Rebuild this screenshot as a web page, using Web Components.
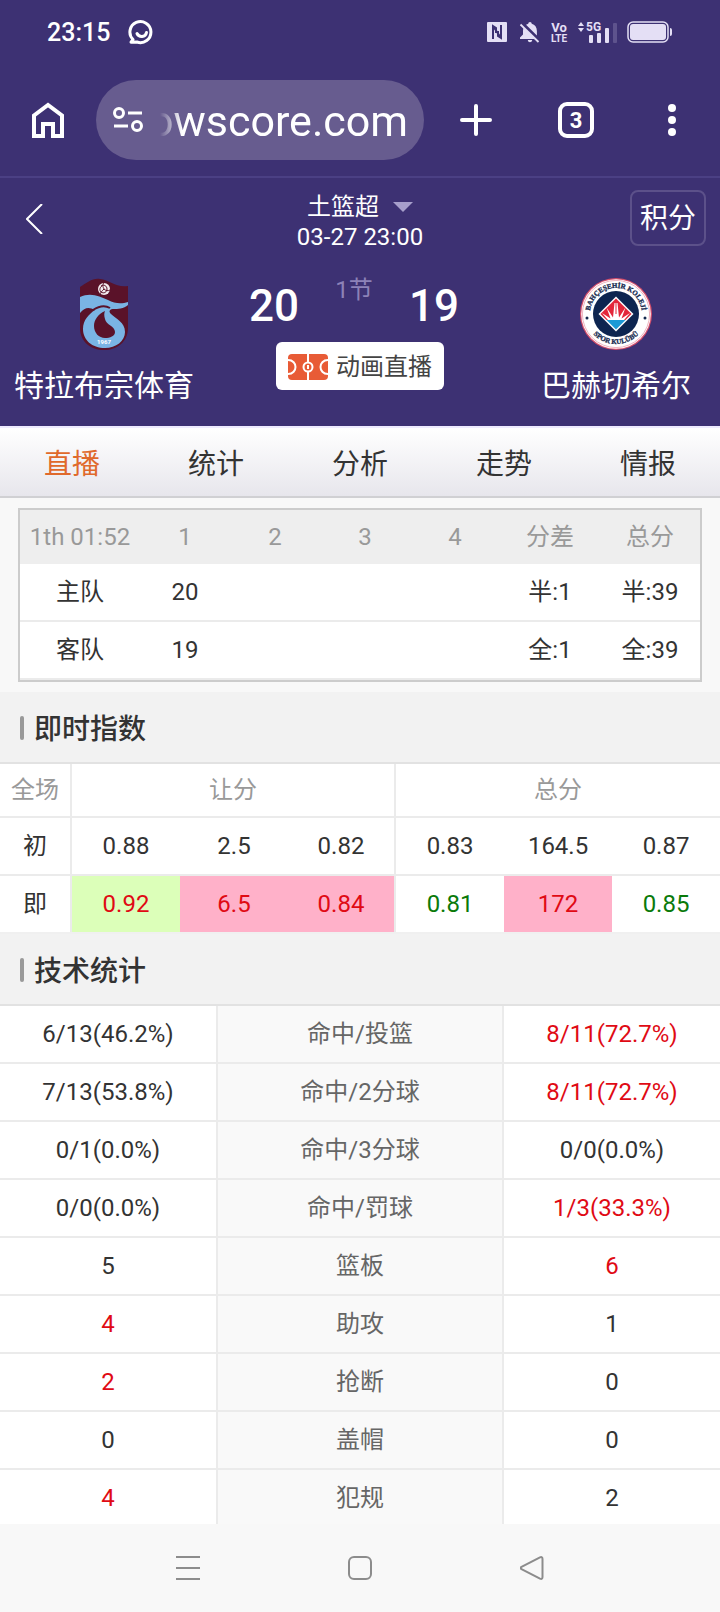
<!DOCTYPE html>
<html lang="zh-CN">
<head>
<meta charset="utf-8">
<meta name="viewport" content="width=device-width, initial-scale=1">
<title>土篮超 特拉布宗体育 - 巴赫切希尔</title>
<style>
  html, body { margin: 0; height: 100%; }
  body {
    --brand: #3d3173;
    --ink: #333;
    --muted: #999;
    --rule: #ebebeb;
    --up: #e00a14;
    --down: #0a7a0a;
    background: #f8f8f8;
    color: var(--ink);
    font-family: Roboto, "Noto Sans CJK SC", sans-serif;
    font-size: 24px;
    line-height: 32px;
  }
</style>
</head>
<body>
<match-app></match-app>

<script>
const define = (name, markup, setup) => {
  customElements.define(name, class extends HTMLElement {
    constructor() {
      super();
      const template = document.createElement('template');
      template.innerHTML = markup;
      this.attachShadow({ mode: 'open' }).appendChild(template.content);
    }
    connectedCallback() { if (setup) setup.call(this, this.shadowRoot); }
  });
};

define('status-bar', `
  <style>
    :host { display: flex; justify-content: space-between; align-items: center; height: 64px; padding: 0 47px; background: var(--brand); color: #fff; }
    div { display: flex; align-items: center; }
    svg { display: block; }
    .left { gap: 18px; }
    .right { gap: 8px; }
    .nfc { margin-right: 4px; }
    time { padding-top: 2px; font-size: 25px; font-weight: 500; }
    text { font-family: Roboto, sans-serif; font-weight: 700; }
  </style>
  <div class="left">
    <time>23:15</time>
    <svg width="26" height="26" viewBox="0 0 26 26" fill="none" stroke="#fff" stroke-width="3">
      <path d="M5 20.5A10.5 10.5 0 1 1 9 23L3 23.2z" stroke-linejoin="round"/>
      <path d="M9 14.5c2 4.200 8.500 4 9.500-1" stroke-linecap="round"/>
    </svg>
  </div>
  <div class="right">
    <svg class="nfc" width="20" height="20" viewBox="0 0 20 20" aria-label="NFC">
      <rect width="20" height="20" rx="1" fill="#e4dff5"/>
      <path d="M6 17V4l3 2v5M14 3v13l-3-2V9M6 4l8 12" fill="none" stroke="#3d3173" stroke-width="2"/>
    </svg>
    <svg width="22" height="22" viewBox="0 0 22 22" aria-label="静音">
      <path fill="#e4dff5" d="M11 1c1 0 1.700.7 1.700 1.800 3.300.8 5.200 3.500 5.200 7.200v4.500L7 3.700c.7-.4 1.500-.7 2.300-.9C9.300 1.700 10 1 11 1zM4.700 6.800 16 18H1v-1.500l3-3V10c0-1.200.2-2.300.7-3.200zM8.800 19h4.400c-.2 3-4.200 3-4.400 0z"/>
      <path d="M1.500 3.500l18 17.500" stroke="#e4dff5" stroke-width="1.800"/>
    </svg>
    <svg width="20" height="22" viewBox="0 0 20 22" fill="#e4dff5">
      <text x="10" y="11" font-size="13" text-anchor="middle">Vo</text>
      <text x="10" y="21" font-size="10" text-anchor="middle">LTE</text>
    </svg>
    <svg width="42" height="22" viewBox="0 0 42 22" fill="#e4dff5">
      <path d="M1 5l3-4 3 4zM1 7h6l-3 4z"/>
      <text x="9" y="10" font-size="12">5G</text>
      <rect x="12" y="14" width="4" height="8" rx="1"/>
      <rect x="20" y="12" width="4" height="10" rx="1"/>
      <rect x="28" y="7" width="4" height="15" rx="1"/>
      <rect x="36" y="2" width="4" height="20" rx="1" fill="#5e538d"/>
    </svg>
    <svg width="46" height="22" viewBox="0 0 46 22" aria-label="电量">
      <rect x="1" y="1" width="40" height="20" rx="5" fill="none" stroke="#e4dff5" stroke-width="1.500"/>
      <rect x="3" y="3" width="36" height="16" rx="3" fill="#e4dff5"/>
      <path d="M43 7q2 0 2 2v4q0 2-2 2z" fill="#e4dff5"/>
    </svg>
  </div>
`);

define('browser-bar', `
  <style>
    :host { display: flex; align-items: center; padding: 16px 0; background: var(--brand); border-bottom: 2px solid #4b4084; }
    button { flex: none; width: 96px; height: 80px; padding: 0; border: 0; background: none; display: grid; place-items: center; }
    .add { width: 104px; }
    .pill { flex: 1; min-width: 0; height: 80px; box-sizing: border-box; padding: 0 16px; border-radius: 40px; background: #675c8f; display: flex; align-items: center; gap: 16px; }
    .pill svg { flex: none; }
    .url { flex: 1; min-width: 0; overflow: hidden; display: flex; justify-content: flex-end; mask-image: linear-gradient(90deg, transparent, #000 22px); -webkit-mask-image: linear-gradient(90deg, transparent, #000 22px); }
    input { flex: none; width: 272px; height: 64px; padding: 2px 0 0; border: 0; outline: 0; background: none; color: #fff; font: 400 43px/64px Roboto, sans-serif; text-align: right; }
    text { font: 700 22px Roboto, sans-serif; }
  </style>
  <button aria-label="主页"><svg width="32" height="36" viewBox="0 0 32 36" fill="none" stroke="#fff" stroke-width="4"><path d="M2 34V13.500L16 3l14 10.500V34h-9V22H11v12z"/></svg></button>
  <div class="pill">
    <svg width="32" height="28" viewBox="0 0 32 28" fill="none" stroke="#fff" stroke-width="3"><circle cx="7" cy="7" r="4.500"/><path d="M16 7h14M2 20h14"/><circle cx="25" cy="20" r="4.500"/></svg>
    <div class="url"><input aria-label="网址" value="owscore.com"></div>
  </div>
  <button class="add" aria-label="新标签页"><svg width="32" height="32" viewBox="0 0 32 32" stroke="#fff" stroke-width="4" stroke-linecap="round"><path d="M16 2v28M2 16h28"/></svg></button>
  <button aria-label="标签页"><svg width="36" height="36" viewBox="0 0 36 36"><rect x="2" y="2" width="32" height="32" rx="7" fill="none" stroke="#fff" stroke-width="4"/><text x="18" y="26" text-anchor="middle" fill="#fff">3</text></svg></button>
  <button aria-label="更多"><svg width="8" height="32" viewBox="0 0 8 32" fill="#fff"><circle cx="4" cy="4" r="4"/><circle cx="4" cy="16" r="4"/><circle cx="4" cy="28" r="4"/></svg></button>
`);

define('home-crest', `
  <style>:host { display: block; } svg { display: block; } text { font: 700 6px Roboto, sans-serif; }</style>
  <svg width="50" height="72" viewBox="0 0 50 72">
    <path fill="#5a1229" d="M1 9C8 5 13 0 21 1c10 1 16 9 28 7v42c0 14-11 22-24 22S1 64 1 50z"/>
    <path fill="#7ab4e4" d="M1 19c10-5 20-1 28 3 7 4 14 4 20 2v3c-4 4-11 4-14 4-4 0-6 2-3 5 5 5 14 8 14 18 0 9-9 16-20 16C13 70 4 62 4 51c0-9 6-15 12-19-6-3-10-3-15 3z"/>
    <path fill="#5a1229" d="M26 33c-7 3-11 9-11 15 0 7 5 12 11 12 5 0 10-2 10-6 0-6-9-7-10-13-1-3-1-6 0-8z"/>
    <path fill="none" stroke="#5a1229" stroke-width="2" d="M14 32c6-4 12-5 17-2"/>
    <circle cx="25" cy="11" r="6" fill="#f4ecef"/>
    <path d="M22 8c3-2 6 0 6 3M28 11c0 3-3 5-6 3M22 14c-2-2-1-5 1-6M25 5c-2 2-1 4 0 6M31 12c-2 1-4 1-6-1M21 16c1-2 2-3 4-5" fill="none" stroke="#5a1229"/>
    <text x="25" y="66" text-anchor="middle" fill="#fff">1967</text>
  </svg>
`);

define('away-crest', `
  <style>:host { display: block; } svg { display: block; } text { font: 700 7px "Liberation Serif", serif; fill: #14284e; stroke: #14284e; stroke-width: .3px; }</style>
  <svg width="72" height="72" viewBox="0 0 72 72">
    <circle cx="36" cy="36" r="36" fill="#d8506c"/>
    <circle cx="36" cy="36" r="34.800" fill="#fff"/>
    <circle cx="36" cy="36" r="33.600" fill="none" stroke="#e9a0ae" stroke-width=".8"/>
    <circle cx="36" cy="36" r="23" fill="#0d2550"/>
    <path fill="#fff" d="M36 18.500 53.500 36 36 53.500 18.500 36z"/>
    <path fill="#e3263a" d="M36 20.500 51.500 36l-6 6h-19l-6-6z"/>
    <path fill="#fff" d="M28 42 22 35 30.500 40.500 26.500 29.500 33 39.500 34.500 25h3L39 39.500l6.500-10-4 11L50 35l-6 7z"/>
    <path fill="#e3263a" d="M35.500 22h1v14h-1z"/>
    <path fill="#1c9ad6" d="M26.500 42h19L36 51.500z"/>
    <path id="top" d="M11.600 44.900A26 26 0 1 1 60.400 44.900" fill="none"/>
    <path id="bottom" d="M5 40A31.500 31.500 0 0 0 67 40" fill="none"/>
    <text text-anchor="middle"><textPath href="#top" startOffset="50%">BAHÇEŞEHİR KOLEJİ</textPath></text>
    <text text-anchor="middle"><textPath href="#bottom" startOffset="50%">SPOR KULÜBÜ</textPath></text>
    <circle cx="7" cy="40" r="1.500" fill="#14284e"/><circle cx="65" cy="40" r="1.500" fill="#14284e"/>
  </svg>
`);

define('team-card', `
  <style>
    :host { display: flex; flex-direction: column; align-items: center; gap: 16px; }
    .name { font-size: 30px; line-height: 40px; white-space: nowrap; }
  </style>
  <slot name="crest"></slot>
  <div class="name"><slot></slot></div>
`);

define('match-header', `
  <style>
    :host { display: block; padding: 12px 0 20px; background: var(--brand); color: #fff; }
    .top { display: grid; grid-template-columns: 104px 1fr 104px; align-items: start; padding-bottom: 26px; }
    .back { display: block; padding: 14px 26px; height: 30px; }
    svg { display: block; }
    .league { padding-top: 2px; text-align: center; line-height: 30px; }
    .league button { display: inline-flex; align-items: center; gap: 14px; padding: 0; border: 0; background: none; color: inherit; font: inherit; }
    .league time { display: block; }
    .points { justify-self: end; margin-right: 14px; width: 76px; height: 56px; padding: 2px 0 0; border: 2px solid #5c518a; border-radius: 8px; background: none; color: inherit; font: inherit; font-size: 28px; }
    .board { display: grid; grid-template-columns: 208px 1fr 208px; }
    .score { display: grid; justify-items: center; align-content: start; gap: 14px; }
    .numbers { display: grid; grid-template-columns: 80px 80px 80px; height: 50px; padding-right: 12px; text-align: center; }
    .numbers b { padding-top: 6px; font-size: 44px; line-height: 44px; font-weight: 500; }
    .numbers span { line-height: 24px; color: #8d82b8; }
    .live { display: flex; align-items: center; gap: 8px; height: 48px; padding: 2px 12px 0; border: 0; border-radius: 6px; background: #fff; color: #444; font: inherit; white-space: nowrap; }
  </style>
  <div class="top">
    <a class="back" href="#" aria-label="返回"><svg width="18" height="30" viewBox="0 0 18 30" fill="none" stroke="#fff" stroke-width="2"><path d="M16 0 1 15l15 15"/></svg></a>
    <div class="league">
      <button>土篮超<svg width="20" height="10" viewBox="0 0 20 10"><path d="M0 0h20L10 10z" fill="#a79fcb"/></svg></button>
      <time>03-27 23:00</time>
    </div>
    <button class="points">积分</button>
  </div>
  <div class="board">
    <team-card><home-crest slot="crest"></home-crest>特拉布宗体育</team-card>
    <div class="score">
      <div class="numbers"><b>20</b><span>1节</span><b>19</b></div>
      <button class="live">
        <svg width="40" height="26" viewBox="0 0 40 26"><rect width="40" height="26" rx="4" fill="#e85b36"/><g fill="none" stroke="#fff" stroke-width="2"><path d="M20 0v26M0 6c10 0 10 14 0 14M40 6c-10 0-10 14 0 14"/><circle cx="20" cy="13" r="4.500" fill="#e85b36"/><path d="M20 11v4"/></g></svg>
        动画直播
      </button>
    </div>
    <team-card><away-crest slot="crest"></away-crest>巴赫切希尔</team-card>
  </div>
`);

define('tab-bar', `
  <style>
    :host { display: flex; border-top: 2px solid #eeebff; border-bottom: 2px solid #d0d0d3; background: linear-gradient(#fff, #e7e6ec); }
    a { flex: 1; padding-top: 6px; text-align: center; font-size: 28px; line-height: 62px; color: var(--ink); text-decoration: none; }
    a[aria-current] { color: #e0692b; }
  </style>
  <a href="#" aria-current="page">直播</a><a href="#">统计</a><a href="#">分析</a><a href="#">走势</a><a href="#">情报</a>
`);

define('quarter-table', `
  <style>
    :host { display: block; margin: 10px 18px; border: 2px solid #ccc; background: #fff; }
    table { width: 100%; table-layout: fixed; border-collapse: separate; border-spacing: 0; }
    th, td { padding: 0; height: 56px; text-align: center; font-weight: 400; border-bottom: 2px solid var(--rule); white-space: nowrap; }
    thead th { height: 54px; border: 0; background: #eee; color: var(--muted); }
    .team { width: 120px; } .part { width: 90px; } .sum { width: 100px; }
  </style>
  <table>
    <colgroup><col class="team"><col class="part" span="4"><col class="sum" span="2"></colgroup>
    <thead><tr><th>1th 01:52</th><th>1</th><th>2</th><th>3</th><th>4</th><th>分差</th><th>总分</th></tr></thead>
    <tbody>
      <tr><th scope="row">主队</th><td>20</td><td></td><td></td><td></td><td>半:1</td><td>半:39</td></tr>
      <tr><th scope="row">客队</th><td>19</td><td></td><td></td><td></td><td>全:1</td><td>全:39</td></tr>
    </tbody>
  </table>
`);

define('section-title', `
  <style>
    :host { display: flex; align-items: center; gap: 10px; height: 68px; padding: 2px 0 0 20px; background: #f2f2f2; border-bottom: 2px solid #e2e2e2; }
    i { width: 4px; height: 24px; border-radius: 2px; background: #999; }
    h2 { margin: 0; padding-top: 4px; font-size: 28px; line-height: 40px; font-weight: 500; }
  </style>
  <i></i><h2><slot></slot></h2>
`);

define('odds-table', `
  <style>
    :host { display: block; background: #fff; border-bottom: 2px solid #f0f0f0; }
    table { width: 100%; table-layout: fixed; border-collapse: separate; border-spacing: 0; }
    th, td { padding: 0; height: 56px; text-align: center; font-weight: 400; }
    thead th { height: 52px; color: var(--muted); }
    thead th, .first > * { border-bottom: 2px solid var(--rule); }
    .edge { border-right: 2px solid var(--rule); }
    .label { width: 72px; } .odd { width: 108px; }
    .up { color: var(--up); } .down { color: var(--down); }
    .pink { background: #ffb1c9; background-clip: padding-box; } .lime { background: #dcffb9; }
  </style>
  <table>
    <colgroup><col class="label"><col class="odd" span="6"></colgroup>
    <thead><tr><th class="edge">全场</th><th class="edge" colspan="3">让分</th><th colspan="3">总分</th></tr></thead>
    <tbody>
      <tr class="first"><th scope="row" class="edge">初</th><td>0.88</td><td>2.5</td><td class="edge">0.82</td><td>0.83</td><td>164.5</td><td>0.87</td></tr>
      <tr><th scope="row" class="edge">即</th><td class="up lime">0.92</td><td class="up pink">6.5</td><td class="up pink edge">0.84</td><td class="down">0.81</td><td class="up pink">172</td><td class="down">0.85</td></tr>
    </tbody>
  </table>
`);

const stats = [
  ['6/13(46.2%)', '命中/投篮', '8/11(72.7%)', 'away'],
  ['7/13(53.8%)', '命中/2分球', '8/11(72.7%)', 'away'],
  ['0/1(0.0%)', '命中/3分球', '0/0(0.0%)', ''],
  ['0/0(0.0%)', '命中/罚球', '1/3(33.3%)', 'away'],
  ['5', '篮板', '6', 'away'],
  ['4', '助攻', '1', 'home'],
  ['2', '抢断', '0', 'home'],
  ['0', '盖帽', '0', ''],
  ['4', '犯规', '2', 'home']
];

define('stats-table', `
  <style>
    :host { display: block; background: #fff; }
    table { width: 100%; table-layout: fixed; border-collapse: separate; border-spacing: 0; }
    th, td { padding: 0; height: 56px; text-align: center; font-weight: 400; border-bottom: 2px solid var(--rule); }
    th { width: 40%; background: #f9f9f9; color: #666; border-left: 2px solid var(--rule); border-right: 2px solid var(--rule); box-sizing: border-box; height: 58px; }
    .lead { color: var(--up); }
  </style>
  <table><tbody></tbody></table>
`, function (root) {
  root.querySelector('tbody').innerHTML = stats.map(([home, label, away, lead]) => `
    <tr><td class="${lead === 'home' ? 'lead' : ''}">${home}</td><th scope="row">${label}</th><td class="${lead === 'away' ? 'lead' : ''}">${away}</td></tr>`).join('');
});

define('system-nav', `
  <style>
    :host { display: flex; justify-content: center; height: 88px; background: #f8f8f8; }
    button { width: 172px; padding: 0; border: 0; background: none; display: grid; place-items: center; }
    svg { fill: none; stroke: #8c8c8c; stroke-width: 2; stroke-linejoin: round; }
  </style>
  <button aria-label="菜单"><svg width="24" height="24" viewBox="0 0 24 24"><path d="M0 1h24M0 12h24M0 23h24"/></svg></button>
  <button aria-label="主屏幕"><svg width="24" height="24" viewBox="0 0 24 24"><rect x="1" y="1" width="22" height="22" rx="5"/></svg></button>
  <button aria-label="返回"><svg width="24" height="24" viewBox="0 0 24 24"><path d="M1.500 10.800 20 1.400q2.500-1 2.500 1.600v18q0 2.600-2.500 1.600L1.500 13.200q-1.500-1.200 0-2.400z"/></svg></button>
`);

define('match-app', `
  <style>
    :host { display: flex; flex-direction: column; height: 100vh; }
    status-bar, browser-bar, system-nav { flex: none; }
    main { flex: 1; min-height: 0; overflow-y: auto; scrollbar-width: none; }
  </style>
  <status-bar></status-bar>
  <browser-bar></browser-bar>
  <main>
    <match-header></match-header>
    <tab-bar></tab-bar>
    <quarter-table></quarter-table>
    <section-title>即时指数</section-title>
    <odds-table></odds-table>
    <section-title>技术统计</section-title>
    <stats-table></stats-table>
  </main>
  <system-nav></system-nav>
`);
</script>
</body>
</html>
